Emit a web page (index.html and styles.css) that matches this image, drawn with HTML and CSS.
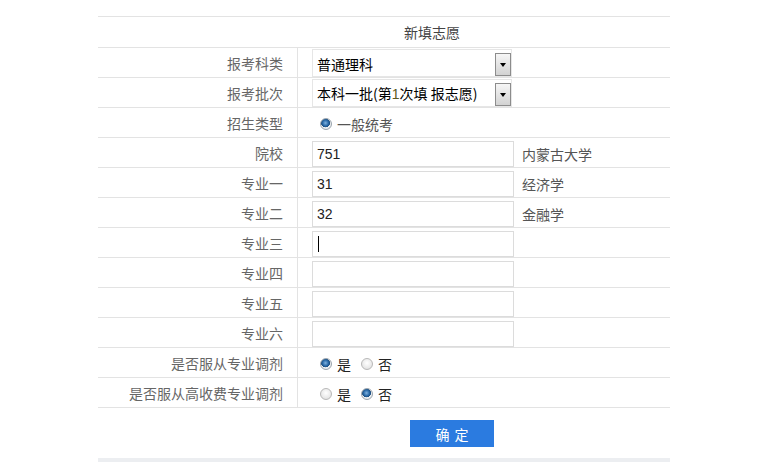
FILE: index.html
```html
<!DOCTYPE html>
<html lang="zh-CN">
<head>
<meta charset="utf-8">
<title>新填志愿</title>
<link rel="stylesheet" href="styles.css">
</head>
<body>
<div class="form">
  <div class="title-row"><span class="title">新填志愿</span></div>

  <div class="row">
    <div class="label">报考科类</div>
    <div class="field">
      <div class="select"><span class="sel-text">普通理科</span><span class="sel-btn"><i class="tri"></i></span></div>
    </div>
  </div>

  <div class="row">
    <div class="label">报考批次</div>
    <div class="field">
      <div class="select"><span class="sel-text">本科一批(第<b class="num">1</b>次填 报志愿)</span><span class="sel-btn"><i class="tri"></i></span></div>
    </div>
  </div>

  <div class="row">
    <div class="label">招生类型</div>
    <div class="field radios">
      <span class="radio checked"></span><span class="rtext grey">一般统考</span>
    </div>
  </div>

  <div class="row">
    <div class="label">院校</div>
    <div class="field">
      <div class="input">751</div><span class="note">内蒙古大学</span>
    </div>
  </div>

  <div class="row">
    <div class="label">专业一</div>
    <div class="field">
      <div class="input">31</div><span class="note">经济学</span>
    </div>
  </div>

  <div class="row">
    <div class="label">专业二</div>
    <div class="field">
      <div class="input">32</div><span class="note">金融学</span>
    </div>
  </div>

  <div class="row">
    <div class="label">专业三</div>
    <div class="field">
      <div class="input"><span class="caret"></span></div>
    </div>
  </div>

  <div class="row">
    <div class="label">专业四</div>
    <div class="field"><div class="input"></div></div>
  </div>

  <div class="row">
    <div class="label">专业五</div>
    <div class="field"><div class="input"></div></div>
  </div>

  <div class="row">
    <div class="label">专业六</div>
    <div class="field"><div class="input"></div></div>
  </div>

  <div class="row">
    <div class="label">是否服从专业调剂</div>
    <div class="field radios">
      <span class="radio checked"></span><span class="rtext">是</span>
      <span class="radio"></span><span class="rtext">否</span>
    </div>
  </div>

  <div class="row">
    <div class="label">是否服从高收费专业调剂</div>
    <div class="field radios">
      <span class="radio"></span><span class="rtext">是</span>
      <span class="radio checked"></span><span class="rtext">否</span>
    </div>
  </div>

  <div class="actions"><button class="btn" type="button">确 定</button></div>
  <div class="bar"></div>
</div>
</body>
</html>
```

FILE: styles.css
```css
html, body {
  margin: 0;
  padding: 0;
  background: #ffffff;
}

body {
  font-family: "Noto Sans CJK SC", "Liberation Sans", sans-serif;
  font-size: 14px;
  color: #333;
}

.form {
  width: 572px;
  margin-left: 98px;
  padding-top: 16px;
}

.title-row {
  height: 30px;
  border-top: 1px solid #e3e3e3;
  border-bottom: 1px solid #e3e3e3;
  display: flex;
  align-items: center;
  padding-left: 306px;
}

.title {
  color: #444;
  font-size: 14px;
  line-height: 30px;
}

.row {
  display: grid;
  grid-template-columns: 200px 1fr;
  height: 30px;
  box-sizing: border-box;
  border-bottom: 1px solid #e3e3e3;
}

.label {
  border-right: 1px solid #e3e3e3;
  text-align: right;
  padding-right: 14px;
  padding-top: 1px;
  line-height: 29px;
  color: #666;
  font-size: 14px;
  white-space: nowrap;
}

.field {
  display: flex;
  align-items: flex-start;
  padding-left: 14px;
}

.input {
  width: 202px;
  height: 26px;
  margin-top: 3px;
  box-sizing: border-box;
  border: 1px solid #dcdcdc;
  padding-left: 4px;
  font-family: "Liberation Sans", "Noto Sans CJK SC", sans-serif;
  font-size: 14px;
  line-height: 24px;
  color: #222;
  display: flex;
  align-items: center;
}

.caret {
  display: block;
  width: 1px;
  height: 16px;
  background: #000;
  margin-left: 1px;
}

.note {
  margin-left: 8px;
  padding-top: 2px;
  line-height: 29px;
  color: #555;
  font-size: 14px;
}

.select {
  position: relative;
  width: 200px;
  height: 28px;
  margin-top: 1px;
  box-sizing: border-box;
  border: 1px solid #e6e6e6;
  padding-left: 4px;
  padding-top: 1px;
  display: flex;
  align-items: center;
}

.sel-text {
  color: #000;
  font-size: 14px;
  line-height: 26px;
  white-space: nowrap;
}

.num {
  font-weight: normal;
  font-family: "Liberation Sans", sans-serif;
  color: #5a5a20;
}

.sel-btn {
  position: absolute;
  right: 0;
  top: 3px;
  width: 16px;
  height: 23px;
  box-sizing: border-box;
  border: 1px solid #8c8c8c;
  background: linear-gradient(#f6f6f6, #d2d2d2);
  display: flex;
  align-items: center;
  justify-content: center;
}

.tri {
  display: block;
  width: 0;
  height: 0;
  border-top: 4px solid #000;
  border-left: 3.5px solid transparent;
  border-right: 3.5px solid transparent;
}

.radios {
  align-items: center;
  padding-top: 2px;
}

.radio {
  display: inline-block;
  width: 12px;
  height: 12px;
  box-sizing: border-box;
  border-radius: 50%;
  border: 1px solid #b8b8b8;
  background: radial-gradient(circle at 50% 40%, #ffffff 0%, #e6e6e6 70%, #d0d0d0 100%);
  margin-left: 8px;
  flex: none;
}

.radio.checked {
  border-color: #9aa4ad;
  background:
    radial-gradient(circle at 45% 40%, #7fb2e0 0%, #2a6aa8 35%, #1c4e80 52%, transparent 56%),
    radial-gradient(circle, #ffffff 0%, #dfe3e6 100%);
}

.rtext {
  margin-left: 5px;
  color: #222;
  font-size: 14px;
  line-height: 27px;
}

.rtext + .radio {
  margin-left: 10px;
}

.rtext.grey {
  color: #555;
}

.actions {
  height: 50px;
  box-sizing: border-box;
  padding-top: 12px;
  padding-left: 312px;
}

.btn {
  display: block;
  width: 84px;
  height: 27px;
  border: 0;
  margin: 0;
  padding: 0;
  background: #2b7be0;
  color: #ffffff;
  font-family: "Noto Sans CJK SC", sans-serif;
  font-size: 14px;
  word-spacing: 2px;
  cursor: pointer;
}

.bar {
  height: 4px;
  background: #eceef1;
}
```
